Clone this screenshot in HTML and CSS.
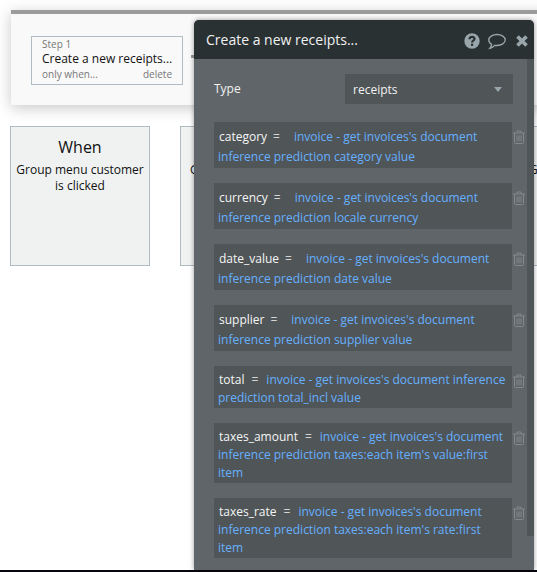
FILE: index.html
```html
<!DOCTYPE html>
<html lang="en">
<head>
<meta charset="utf-8">
<title>Workflow editor</title>
<link rel="stylesheet" href="styles.css">
</head>
<body>
<svg class="defs" width="0" height="0" aria-hidden="true">
  <symbol id="trash" viewBox="0 0 12 14">
    <path d="M0 3H12M4 3V1H8V3M1.5 3V12.5Q1.5 13.5 2.5 13.5H9.5Q10.5 13.5 10.5 12.5V3M4 5.3V11.4M6 5.3V11.4M8 5.3V11.4" fill="none" stroke="currentColor"/>
  </symbol>
</svg>
<main class="workspace">
  <section class="steps">
    <div class="step">
      <div class="step-number">Step 1</div>
      <div class="step-name">Create a new receipts...</div>
      <div class="step-actions"><span>only when...</span><span>delete</span></div>
    </div>
    <span class="arrow"></span>
  </section>
  <section class="events">
    <div class="event"><h2>When</h2><p>Group menu customer<br>is clicked</p></div>
    <div class="event cut"><p>G</p></div>
    <div class="event"></div>
    <div class="event cut last"><p>G</p></div>
  </section>
</main>
<div class="bottom-line"></div>
<aside class="editor">
  <header class="editor-head">
    <h1>Create a new receipts...</h1>
    <svg class="help" width="16" height="16" viewBox="0 0 16 16"><circle cx="8" cy="8" r="7.7" fill="#98a5aa"/><path d="M5.5 6.2C5.6 3 10.6 3.1 10.5 6C10.4 7.8 8.1 7.6 8.1 9.5" fill="none" stroke="#293133" stroke-width="2.2"/><rect x="7" y="10.7" width="2.2" height="2.2" fill="#293133"/></svg>
    <svg class="comment" width="18" height="17" viewBox="0 0 18 17"><path d="M9 1.5C13.6 1.5 17.2 3.9 17.2 7C17.2 10.1 13.6 12.5 9 12.5Q7.8 12.5 6.7 12.3Q4.6 14.8 1.9 15.3Q3.5 13.5 3.6 11.4C1.8 10.4 .8 8.8 .8 7C.8 3.9 4.4 1.5 9 1.5Z" fill="none" stroke="#98a5aa" stroke-width="1.3"/></svg>
    <svg class="close" width="12" height="12" viewBox="0 0 12 12"><path d="M1.5 1.5L10.5 10.5M10.5 1.5L1.5 10.5" stroke="#98a5aa" stroke-width="3.7"/></svg>
  </header>
  <div class="editor-body">
    <div class="content">
      <div class="type-row"><span>Type</span><div class="select"><span>receipts</span><i class="caret"></i></div></div>
      <div class="row"><div class="field"><span class="key">category</span><span class="eq e-wide">=</span><span>invoice - get invoices's document<br>inference prediction category value</span></div><svg class="trash"><use href="#trash"/></svg></div>
      <div class="row"><div class="field"><span class="key">currency</span><span class="eq e-wide">=</span><span>invoice - get invoices's document<br>inference prediction locale currency</span></div><svg class="trash"><use href="#trash"/></svg></div>
      <div class="row"><div class="field"><span class="key">date_value</span><span class="eq e-wide">=</span><span>invoice - get invoices's document<br>inference prediction date value</span></div><svg class="trash"><use href="#trash"/></svg></div>
      <div class="row"><div class="field"><span class="key">supplier</span><span class="eq e-wide">=</span><span>invoice - get invoices's document<br>inference prediction supplier value</span></div><svg class="trash"><use href="#trash"/></svg></div>
      <div class="row"><div class="field tight"><span class="key">total</span><span class="eq">=</span><span>invoice - get invoices's document inference<br>prediction total_incl value</span></div><svg class="trash"><use href="#trash"/></svg></div>
      <div class="row"><div class="field tight"><span class="key">taxes_amount</span><span class="eq">=</span><span>invoice - get invoices's document<br>inference prediction taxes:each item's value:first<br>item</span></div><svg class="trash"><use href="#trash"/></svg></div>
      <div class="row"><div class="field tight"><span class="key">taxes_rate</span><span class="eq">=</span><span>invoice - get invoices's document<br>inference prediction taxes:each item's rate:first<br>item</span></div><svg class="trash"><use href="#trash"/></svg></div>
    </div>
    <div class="scroll-thumb"></div>
  </div>
</aside>
</body>
</html>
```
FILE: styles.css
```css
* { box-sizing: border-box; }
body { margin: 0; width: 537px; height: 572px; overflow: hidden; position: relative; background: #fff; color: #111; font: 12px "Open Sans", sans-serif; }
h1, h2, p { margin: 0; font-weight: 400; }
svg { display: block; flex: none; }
.defs { position: absolute; }
.workspace { padding: 10px 0 0 10px; width: 537px; height: 570px; overflow: hidden; }
.steps { display: flex; align-items: flex-start; height: 95px; margin: 0 -20px 0 1px; padding: 22px 0 0 20px; border-top: 4px solid #9b9b9b; background: #f9f9f9; box-shadow: 0 3px 14px rgba(0,0,0,.22); }
.step { width: 152px; height: 49px; padding: 0 10px; border: 1px solid #afbdc3; }
.step-number { font-size: 10px; line-height: 14px; color: #777; }
.step-name { line-height: 15px; white-space: nowrap; }
.step-actions { display: flex; justify-content: space-between; font-size: 10px; line-height: 16px; color: #777; }
.arrow { width: 20px; height: 3px; margin: 19px 0 0 8px; background: #999; }
.events { display: flex; gap: 30px; margin-top: 21px; }
.event { width: 140px; height: 140px; flex: none; padding-top: 10px; border: 1px solid #afbdc3; background: #f0f2f1; text-align: center; }
.event h2 { font-size: 16px; line-height: 21px; }
.event p { margin-top: 4px; line-height: 16px; white-space: nowrap; }
.cut { padding: 31px 0 0 9px; text-align: left; }
.last { padding-left: 8px; }
.bottom-line { position: absolute; left: 0; right: 0; bottom: 0; height: 2px; background: #08060d; }
.editor { position: absolute; left: 194px; top: 20px; width: 340px; height: 550px; overflow: hidden; border-radius: 5px 5px 0 0; background: #5f6568; box-shadow: 0 0 5px rgba(0,0,0,.4); }
.editor-head { display: flex; align-items: center; height: 39px; padding: 0 6px 0 12px; background: #293133; color: #f2f2f2; }
.editor-head h1 { flex: 1; font-size: 14px; line-height: 20px; margin-top: 1px; white-space: nowrap; }
.help { margin: 3px 8px 0 0; }
.comment { margin: 4px 10px 0 0; }
.close { margin-top: 3px; }
.editor-body { display: flex; height: 511px; }
.content { width: 333px; padding: 15px 0 0 20px; }
.type-row { display: flex; align-items: center; justify-content: space-between; height: 30px; width: 299px; margin-bottom: 18px; color: #f2f2f2; }
.type-row > span { margin-top: -2px; }
.select { display: flex; align-items: center; justify-content: space-between; width: 168px; height: 30px; padding: 0 11px 0 8px; background: #505558; }
.caret { border: 4px solid transparent; border-top: 5px solid #98a5aa; border-bottom: 0; }
.row { display: flex; align-items: flex-start; margin-bottom: 15px; }
.field { width: 298px; padding: 5px 0 1px 4px; background: #505558; color: #66b0ff; line-height: 20px; white-space: nowrap; }
.tight { line-height: 18px; }
.key { color: #f5f5f5; margin-left: 1px; }
.eq { color: #d5d5d5; margin: 0 8px 0 7px; }
.e-wide { margin: 0 14px 0 6px; }
.trash { width: 12px; height: 14px; margin: 8px 0 0 1px; color: #84898b; }
.scroll-thumb { width: 7px; height: 477px; background: #505558; }
```
